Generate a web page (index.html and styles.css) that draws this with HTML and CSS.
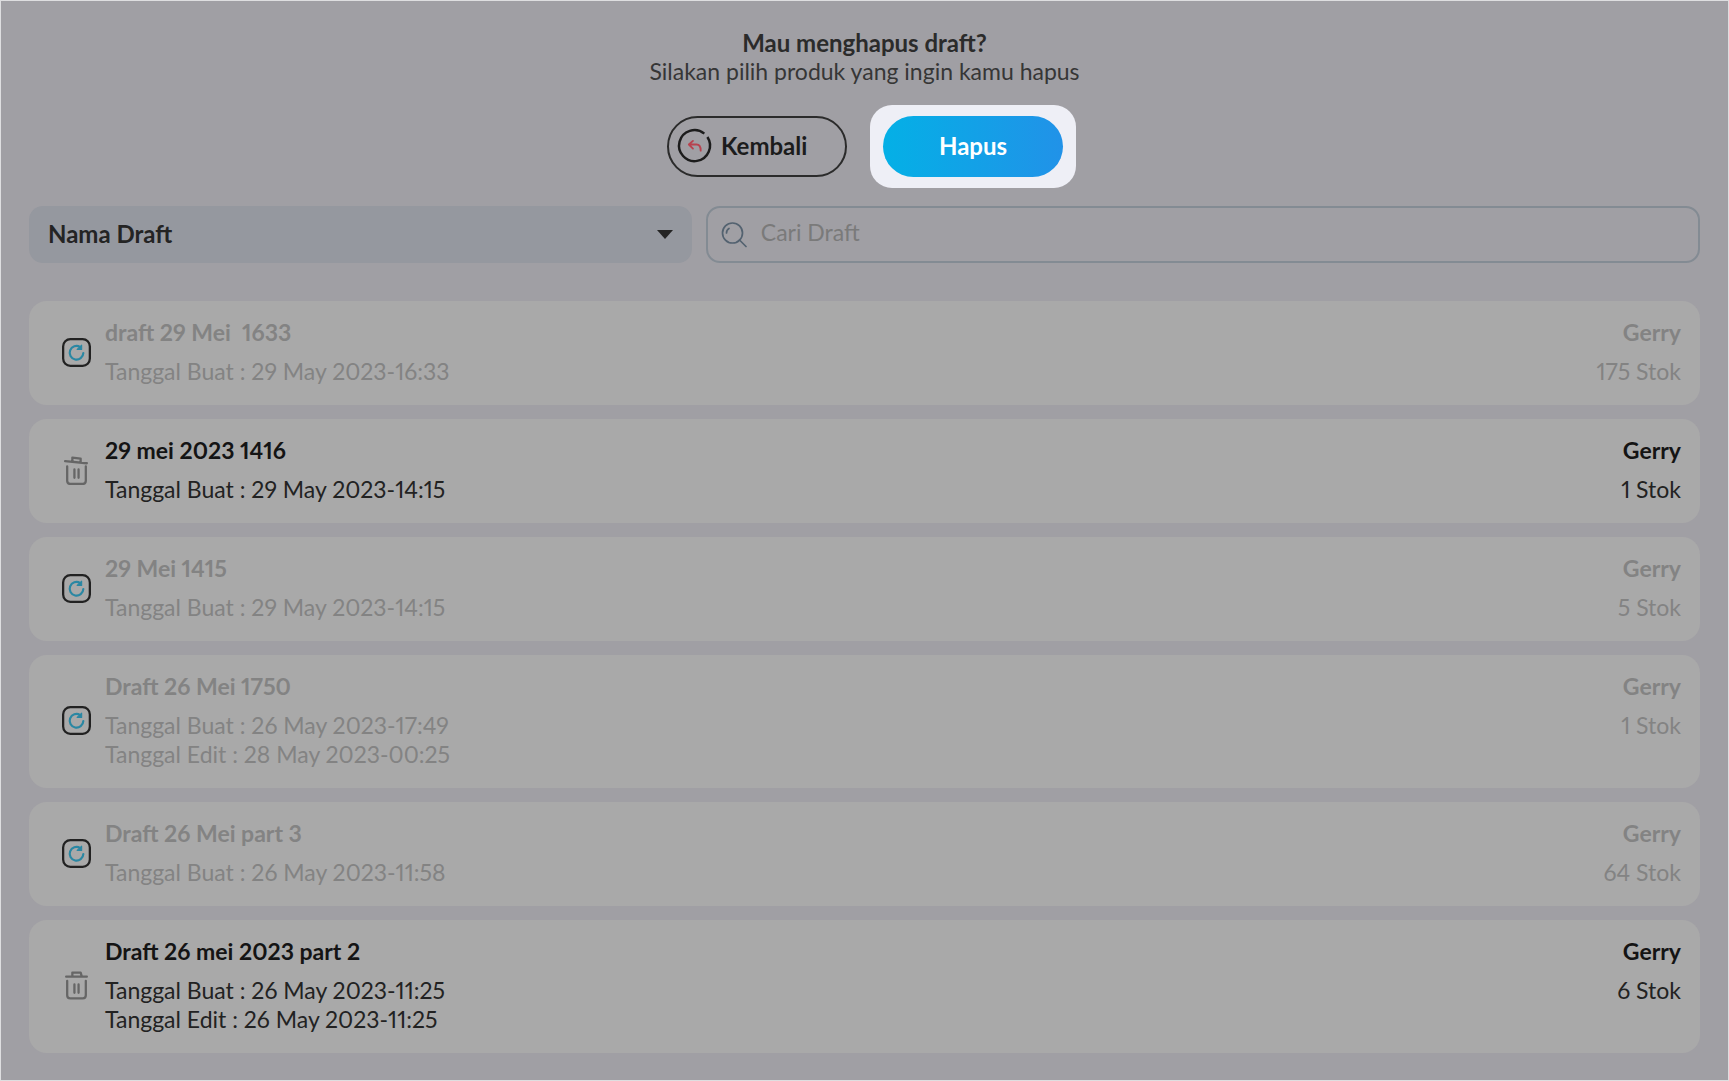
FILE: index.html
```
<!DOCTYPE html>
<html lang="id">
<head>
  <meta charset="UTF-8" />
  <meta name="viewport" content="width=device-width, initial-scale=1.0"/>
  <title>Hapus Draft</title>
  <link rel="stylesheet" href="styles.css">
</head>
<body>
  <svg class="sprite" aria-hidden="true">
    <symbol id="icon-restore" viewBox="0 0 28 28">
      <rect x="1.1" y="1.1" width="25.8" height="25.8" rx="7" fill="none" stroke="#222222" stroke-width="2.2"/>
      <path d="M20.6 14.5a6.6 6.6 0 1 1-3.2-5.9" fill="none" stroke="#2a87a3" stroke-width="2.1" stroke-linecap="round"/>
      <path d="M19 6.800v4.200h-4.400z" fill="#2a87a3" stroke="#2a87a3" stroke-width="1" stroke-linejoin="round"/>
    </symbol>
    <symbol id="icon-trash" viewBox="0 0 28 28">
      <g fill="none" stroke="#666666" stroke-width="2.2" stroke-linecap="round" stroke-linejoin="round">
        <path d="M4 5.500h20M10 5V1.500h8l1 3.500"/>
        <path d="M5 9.500v14q0 3 3 3h12q3 0 3-3v-14"/>
        <path d="M12 13v8M16 13v8"/>
      </g>
    </symbol>
    <symbol id="icon-trash-open" viewBox="0 0 28 28">
      <g fill="none" stroke="#666666" stroke-width="2.2" stroke-linecap="round" stroke-linejoin="round">
        <path d="M3 5l21 2M10 5V1.500l8 1v3.500"/>
        <path d="M5 10v14q0 3 3 3h12q3 0 3-3V10"/>
        <path d="M12 13v8M16 13v8"/>
      </g>
    </symbol>
  </svg>

  <main class="page">
    <header class="intro">
      <h1>Mau menghapus draft?</h1>
      <p>Silakan pilih produk yang ingin kamu hapus</p>
      <div class="actions">
        <button type="button" class="btn btn-back">
          <svg class="back-icon" viewBox="0 0 32 32" aria-hidden="true">
            <path d="M25.500 4.500A15 15 0 1 0 28.500 7.800" fill="none" stroke="#1c1c1c" stroke-width="2.4"/>
            <path d="M14.500 11.500L10.500 15l4 4M10.500 15H18q4 0 4 6" fill="none" stroke="#b8424f" stroke-width="1.8" stroke-linecap="round" stroke-linejoin="round"/>
          </svg>
          Kembali
        </button>
        <div class="highlight">
          <button type="button" class="btn btn-delete">Hapus</button>
        </div>
      </div>
    </header>

    <form class="filters">
      <div class="select-box">
        <select id="filterBy" aria-label="Filter">
          <option>Nama Draft</option>
        </select>
        <svg class="caret" viewBox="0 0 16 9" aria-hidden="true"><path d="M0 0h16L8 9z" fill="#242424"/></svg>
      </div>
      <label class="search-box">
        <svg class="search-icon" viewBox="0 0 26 26" fill="none" stroke="#536270" stroke-width="1.7" stroke-linecap="round" aria-hidden="true">
          <circle cx="11.5" cy="11" r="10"/>
          <path d="M18.5 18l6.5 6.5M5.5 11q0-3 2.5-4.5"/>
        </svg>
        <input type="text" aria-label="Cari Draft" placeholder="Cari Draft">
      </label>
    </form>

    <ul class="drafts">
      <li class="draft disabled">
        <button type="button" class="icon-btn" aria-label="Pulihkan"><svg><use href="#icon-restore"/></svg></button>
        <div class="info">
          <h2>draft 29 Mei&nbsp; 1633</h2>
          <p>Tanggal Buat : 29 May 2023-16:33</p>
        </div>
        <div class="owner">
          <h2>Gerry</h2>
          <p>175 Stok</p>
        </div>
      </li>
      <li class="draft">
        <button type="button" class="icon-btn" aria-label="Hapus"><svg><use href="#icon-trash-open"/></svg></button>
        <div class="info">
          <h2>29 mei 2023 1416</h2>
          <p>Tanggal Buat : 29 May 2023-14:15</p>
        </div>
        <div class="owner">
          <h2>Gerry</h2>
          <p>1 Stok</p>
        </div>
      </li>
      <li class="draft disabled">
        <button type="button" class="icon-btn" aria-label="Pulihkan"><svg><use href="#icon-restore"/></svg></button>
        <div class="info">
          <h2>29 Mei 1415</h2>
          <p>Tanggal Buat : 29 May 2023-14:15</p>
        </div>
        <div class="owner">
          <h2>Gerry</h2>
          <p>5 Stok</p>
        </div>
      </li>
      <li class="draft disabled">
        <button type="button" class="icon-btn" aria-label="Pulihkan"><svg><use href="#icon-restore"/></svg></button>
        <div class="info">
          <h2>Draft 26 Mei 1750</h2>
          <p>Tanggal Buat : 26 May 2023-17:49</p>
          <p>Tanggal Edit : 28 May 2023-00:25</p>
        </div>
        <div class="owner">
          <h2>Gerry</h2>
          <p>1 Stok</p>
        </div>
      </li>
      <li class="draft disabled">
        <button type="button" class="icon-btn" aria-label="Pulihkan"><svg><use href="#icon-restore"/></svg></button>
        <div class="info">
          <h2>Draft 26 Mei part 3</h2>
          <p>Tanggal Buat : 26 May 2023-11:58</p>
        </div>
        <div class="owner">
          <h2>Gerry</h2>
          <p>64 Stok</p>
        </div>
      </li>
      <li class="draft">
        <button type="button" class="icon-btn" aria-label="Hapus"><svg><use href="#icon-trash"/></svg></button>
        <div class="info">
          <h2>Draft 26 mei 2023 part 2</h2>
          <p>Tanggal Buat : 26 May 2023-11:25</p>
          <p>Tanggal Edit : 26 May 2023-11:25</p>
        </div>
        <div class="owner">
          <h2>Gerry</h2>
          <p>6 Stok</p>
        </div>
      </li>
    </ul>
  </main>
</body>
</html>
```
FILE: styles.css
```
* {
  box-sizing: border-box;
}
body {
  margin: 0;
  background-color: #a09fa4;
  color: #222222;
  font-family: Lato, "Open Sans", sans-serif;
  font-size: 23px;
  line-height: 29px;
  font-variant-numeric: proportional-nums;
}
h1, h2, p, ul {
  margin: 0;
  padding: 0;
}
h1, h2 {
  font-size: 23px;
  line-height: 29px;
  font-weight: bold;
}
button, select, input {
  font: inherit;
  color: inherit;
}
.sprite {
  display: none;
}
.page {
  min-height: 100vh;
  padding: 27px 28px 26px;
  border: 1px solid #dedee0;
}
.intro {
  text-align: center;
}
.intro h1 {
  font-size: 24px;
  color: #2b2b2b;
}
.intro p {
  color: #363636;
}

/* tombol */
.actions {
  display: flex;
  justify-content: center;
  align-items: center;
  gap: 23px;
  margin-top: 19px;
  padding-left: 14px;
}
.btn {
  display: flex;
  align-items: center;
  justify-content: center;
  width: 180px;
  height: 61px;
  padding: 0 9px 2px;
  border-radius: 31px;
  font-size: 24px;
  font-weight: bold;
  cursor: pointer;
}
.btn-back {
  justify-content: flex-start;
  gap: 10px;
  border: 2px solid #2b2b2b;
  background: none;
  color: #1c1c1c;
}
.back-icon {
  width: 33px;
  height: 33px;
  overflow: visible;
}
.highlight {
  padding: 11px 13px;
  border-radius: 22px;
  background-color: #eeeff6;
}
.btn-delete {
  border: none;
  background: linear-gradient(to right, #04b0e6, #2192e8);
  color: #ffffff;
}

/* filter dan pencarian */
.filters {
  display: grid;
  grid-template-columns: 2fr 3fr;
  gap: 14px;
  margin-top: 18px;
}
.select-box {
  display: grid;
  align-items: center;
  height: 57px;
  border-radius: 14px;
  background-color: #95989f;
}
.select-box select,
.caret {
  grid-area: 1 / 1;
}
.select-box select {
  width: 100%;
  height: 100%;
  padding: 0 40px 3px 19px;
  border: none;
  background: none;
  appearance: none;
  font-size: 24px;
  font-weight: bold;
  color: #242424;
}
.caret {
  justify-self: end;
  width: 16px;
  height: 9px;
  margin-right: 19px;
  pointer-events: none;
}
.search-box {
  display: flex;
  align-items: center;
  gap: 14px;
  height: 57px;
  padding: 0 14px 0 13px;
  border: 2px solid #838b93;
  border-radius: 14px;
}
.search-icon {
  width: 26px;
  height: 26px;
}
.search-box input {
  flex: 1;
  min-width: 0;
  padding: 0 0 5px;
  border: none;
  outline: none;
  background: none;
}
.search-box input::placeholder {
  color: #7a7a7a;
  opacity: 1;
}

/* daftar draft */
.drafts {
  display: grid;
  gap: 14px;
  margin-top: 38px;
  list-style: none;
}
.draft {
  display: flex;
  gap: 14px;
  padding: 17px 19px 19px 33px;
  border-radius: 18px;
  background-color: #a9a9a9;
}
.draft h2 {
  margin-bottom: 10px;
  color: #141414;
}
.icon-btn {
  align-self: center;
  width: 29px;
  height: 29px;
  padding: 0;
  border: none;
  background: none;
  cursor: pointer;
}
.icon-btn svg {
  display: block;
  width: 29px;
  height: 29px;
}
.info {
  flex: 1;
}
.owner {
  text-align: right;
}
.disabled h2,
.disabled p {
  color: #838383;
}
```
